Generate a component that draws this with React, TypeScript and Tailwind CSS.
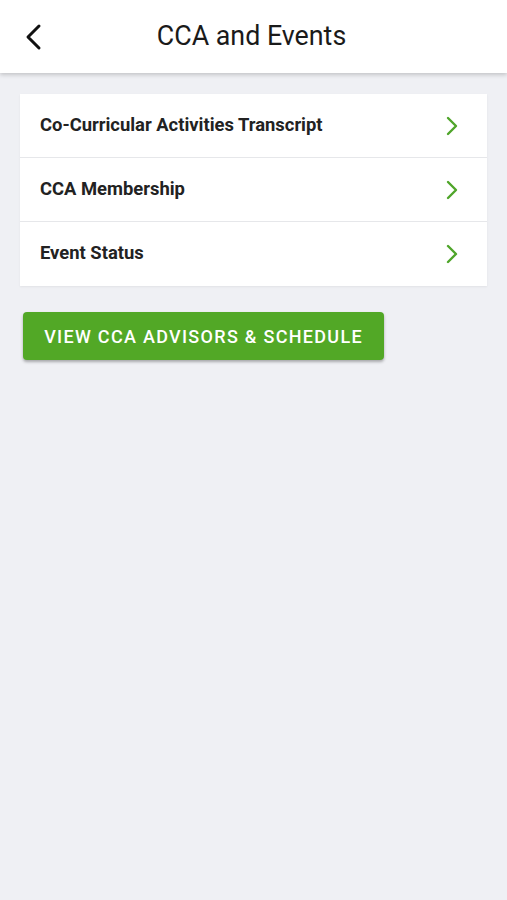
import React from "react";

const Chevron = () => (
  <svg width="14" height="22" viewBox="0 0 14 22" fill="none">
    <path d="M3 3l8 8-8 8" stroke="#4fa52a" strokeWidth="2.4" strokeLinecap="round" strokeLinejoin="round" />
  </svg>
);

export default function App() {
  const rows = ["Co-Curricular Activities Transcript", "CCA Membership", "Event Status"];
  return (
    <div className="min-h-[900px] bg-[#eff0f4] font-['Roboto',sans-serif]">
      <header className="relative h-[73px] bg-white shadow-[0_2px_4px_rgba(0,0,0,0.18)] flex items-center justify-center">
        <button className="absolute left-[22px] top-[22px]">
          <svg width="24" height="30" viewBox="0 0 24 30" fill="none">
            <path d="M17 4L6 15l11 11" stroke="#111" strokeWidth="3" strokeLinecap="round" strokeLinejoin="round" />
          </svg>
        </button>
        <h1 className="text-[26.8px] text-[#1a1a1a] pr-[4px]">CCA and Events</h1>
      </header>
      <div className="px-[20px] pt-[21px]">
        <div className="bg-white shadow-[0_1px_2px_rgba(0,0,0,0.06)] flex flex-col">
          {rows.map((r, i) => (
            <div
              key={r}
              className={`h-[64px] flex items-center justify-between pl-[20px] pr-[28px] ${i < rows.length - 1 ? "border-b border-[#e6e7ea]" : ""}`}
            >
              <span className="text-[18.4px] font-bold text-[#222] -mt-[2px]">{r}</span>
              <Chevron />
            </div>
          ))}
        </div>
        <button className="mt-[26px] ml-[3px] h-[48px] w-[361px] rounded-[4px] bg-[#52a826] text-white text-[18px] font-medium tracking-[1.3px] shadow-[0_2px_3px_rgba(0,0,0,0.3)]">
          VIEW CCA ADVISORS &amp; SCHEDULE
        </button>
      </div>
    </div>
  );
}
